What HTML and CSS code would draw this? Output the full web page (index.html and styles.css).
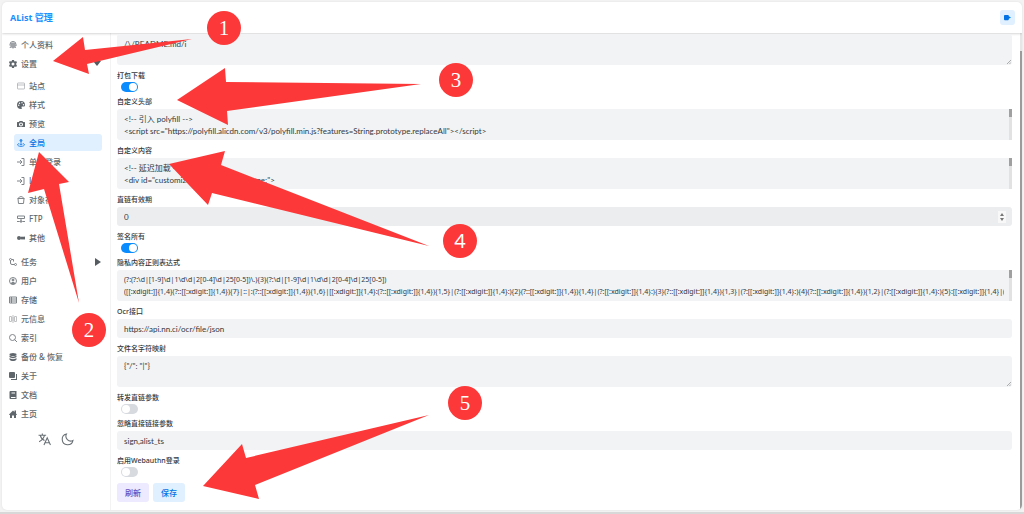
FILE: index.html
```html
<!DOCTYPE html>
<html lang="zh-CN">
<head>
    <meta charset="UTF-8">
    <title>AList 管理</title>
    <link rel="stylesheet" href="styles.css">
</head>
<body>
<div class="window">
    <header class="header">
        <a href="#" class="title">AList 管理</a>
        <button class="logout" aria-label="退出">
            <svg viewBox="0 0 16 16"><path d="M2 2h7a2 2 0 0 1 2 2v1l5 3-5 3v1a2 2 0 0 1-2 2H2a2 2 0 0 1-2-2V4a2 2 0 0 1 2-2z"/></svg>
        </button>
    </header>
    <div class="body">
        <nav class="sidebar">
            <a href="#" class="item">
                <svg class="line" viewBox="0 0 16 16"><path d="M2 9V7a6 6 0 0 1 12 0v3M4 12V8a4 4 0 0 1 8 0v4M6 14V8a2 2 0 0 1 4 0v6M2 12l1 2M8 8v7M13 12l-1 2"/></svg>
                个人资料
            </a>
            <a href="#" class="item">
                <svg viewBox="0 0 16 16"><path fill-rule="evenodd" d="M6 0h4l.6 2.300 1.500.700L14.300 2l1.700 3-1.500 1.500v3L16 11l-1.700 3-2.200-1-1.500.700L10 16H6l-.6-2.300-1.500-.7-2.200 1L0 11l1.500-1.500v-3L0 5l1.700-3 2.200 1 1.500-.7zM8 5a3 3 0 1 0 0 6 3 3 0 0 0 0-6z"/></svg>
                设置
                <span class="arrow down"></span>
            </a>
            <div class="submenu">
                <a href="#" class="item">
                    <svg class="line thin" viewBox="0 0 16 16"><rect x="1" y="2" width="14" height="12" rx="1"/><path d="M1 6h14"/></svg>
                    站点
                </a>
                <a href="#" class="item">
                    <svg viewBox="0 0 16 16"><path fill-rule="evenodd" d="M8 0a8 8 0 1 0 0 16c2 0 2-1.500 1.300-2.500C8.500 12 9.500 11 11 11h2c2 0 3-1 3-3a8 8 0 0 0-8-8zM3.500 7a1.400 1.400 0 1 1 0 2.800 1.400 1.400 0 0 1 0-2.800zM5 3a1.400 1.400 0 1 1 0 2.800A1.400 1.400 0 0 1 5 3zm5-1a1.400 1.400 0 1 1 0 2.800A1.400 1.400 0 0 1 10 2zm3 4a1.400 1.400 0 1 1 0 2.800A1.400 1.400 0 0 1 13 6z"/></svg>
                    样式
                </a>
                <a href="#" class="item">
                    <svg viewBox="0 0 16 16"><path fill-rule="evenodd" d="M5 2h6l1 2h3a1 1 0 0 1 1 1v9H0V5a1 1 0 0 1 1-1h3zM8 5a4 4 0 1 0 0 8 4 4 0 0 0 0-8zm0 2a2 2 0 1 1 0 4 2 2 0 0 1 0-4z"/></svg>
                    预览
                </a>
                <a href="#" class="item active">
                    <svg class="line" viewBox="0 0 16 16"><circle cx="8" cy="3" r="2" fill="currentColor"/><path d="M8 5v7M4 9l-3 2c0 5 14 5 14 0l-3-2M5 10l3 2 3-2"/></svg>
                    全局
                </a>
                <a href="#" class="item">
                    <svg class="line" viewBox="0 0 16 16"><path d="M0 8h10M6 4l4 4-4 4M9 1h5v14H9"/></svg>
                    单点登录
                </a>
                <a href="#" class="item">
                    <svg class="line" viewBox="0 0 16 16"><path d="M0 8h10M6 4l4 4-4 4M9 1h5v14H9"/></svg>
                    LDAP
                </a>
                <a href="#" class="item">
                    <svg class="line" viewBox="0 0 16 16"><path d="M1 5h14M2 5l1 10h10l1-10M3 5c0-5 10-5 10 0"/></svg>
                    对象存储
                </a>
                <a href="#" class="item">
                    <svg class="line" viewBox="0 0 16 16"><path d="M1 2h14v5H1zM8 8v5M0 13h5M11 13h5M6 12h4v2H6z"/></svg>
                    FTP
                </a>
                <a href="#" class="item">
                    <svg viewBox="0 0 16 16"><circle cx="4" cy="8" r="4"/><path d="M6 7h6v2H6z"/><circle cx="10" cy="8" r="3"/><circle cx="14" cy="8" r="3"/></svg>
                    其他
                </a>
            </div>
            <a href="#" class="item">
                <svg class="line" viewBox="0 0 16 16"><circle cx="3" cy="3" r="2"/><circle cx="13" cy="13" r="2"/><path d="M3 5v5a3 3 0 0 0 3 3h5M5 3h4v4"/></svg>
                任务
                <span class="arrow"></span>
            </a>
            <a href="#" class="item">
                <svg class="line" viewBox="0 0 16 16"><circle cx="8" cy="8" r="7"/><circle cx="8" cy="6" r="2" fill="currentColor"/><path fill="currentColor" d="M4 13c2-3 6-3 8 0-3 1-5 1-8 0z"/></svg>
                用户
            </a>
            <a href="#" class="item">
                <svg class="line" viewBox="0 0 16 16"><path d="M1 2h14v12H1zM1 6h14M1 10h14M5 2v12"/></svg>
                存储
            </a>
            <a href="#" class="item light">
                <svg class="line" viewBox="0 0 16 16"><path d="M1 3h4v10H1zM11 3h4v10h-4zM8 0v16M5 6h6M5 10h6"/></svg>
                元信息
            </a>
            <a href="#" class="item">
                <svg class="line" viewBox="0 0 16 16"><circle cx="7" cy="7" r="6"/><path d="M11 11l5 5"/></svg>
                索引
            </a>
            <a href="#" class="item">
                <svg viewBox="0 0 16 16"><ellipse cx="8" cy="3" rx="7" ry="3"/><path d="M1 5c3 3 11 3 14 0v3c-3 3-11 3-14 0zM1 10c3 3 11 3 14 0v3c-3 4-11 4-14 0z"/></svg>
                备份 &amp; 恢复
            </a>
            <a href="#" class="item">
                <svg viewBox="0 0 16 16"><rect width="12" height="12" rx="2"/><path d="M14 4h2v12H4v-2h10z"/></svg>
                关于
            </a>
            <a href="#" class="item">
                <svg viewBox="0 0 16 16"><path fill-rule="evenodd" d="M3 0h12v16H3a2 2 0 0 1-2-2V2a2 2 0 0 1 2-2zm2 3v2h7V3zm-1 9v2h9v-2z"/></svg>
                文档
            </a>
            <a href="#" class="item">
                <svg viewBox="0 0 16 16"><path d="M8 1l3 3V1h3v6l2 2-1 1h-1v6h-4v-5H6v5H2v-6H1L0 9z"/></svg>
                主页
            </a>
            <div class="tools">
                <button aria-label="语言">
                    <svg class="line" viewBox="0 0 24 24"><path d="M1 4h14M8 1v3M12 4c-1 6-6 10-10 12M4 4c1 5 4 8 8 10M11 22l6-13 6 13M13 18h8"/></svg>
                </button>
                <button aria-label="夜间模式">
                    <svg class="line" viewBox="0 0 24 24"><path d="M10 2a9 9 0 0 0 12 12A10 10 0 1 1 10 2z"/></svg>
                </button>
            </div>
        </nav>
        <main class="main">
            <form class="form">
                <div class="area">
                    <textarea aria-label="隐藏文件" wrap="off">/\/README.md/i</textarea>
                    <svg class="grip" viewBox="0 0 5 5"><path d="M0 5l5-5M3 5l2-2"/></svg>
                </div>
                <label for="package">打包下载</label>
                <div class="switch"><input type="checkbox" id="package" checked></div>
                <label for="head">自定义头部</label>
                <div class="area">
                    <textarea id="head" wrap="off">&lt;!-- 引入 polyfill --&gt;
&lt;script src="https://polyfill.alicdn.com/v3/polyfill.min.js?features=String.prototype.replaceAll"&gt;&lt;/script&gt;</textarea>
                    <span class="bar"></span>
                </div>
                <label for="content">自定义内容</label>
                <div class="area">
                    <textarea id="content" wrap="off">&lt;!-- 延迟加载 --&gt;
&lt;div id="customize" style="display: none;"&gt;
        "</textarea>
                    <span class="bar"></span>
                </div>
                <label for="expire">直链有效期</label>
                <div class="number">
                    <input type="number" id="expire" value="0">
                    <span class="spin"></span>
                </div>
                <label for="sign">签名所有</label>
                <div class="switch"><input type="checkbox" id="sign" checked></div>
                <label for="privacy">隐私内容正则表达式</label>
                <div class="area">
                    <textarea id="privacy" class="regex" wrap="off">(?:(?:\d|[1-9]\d|1\d\d|2[0-4]\d|25[0-5])\.){3}(?:\d|[1-9]\d|1\d\d|2[0-4]\d|25[0-5])
([[:xdigit:]]{1,4}(?::[[:xdigit:]]{1,4}){7}|::|:(?::[[:xdigit:]]{1,4}){1,6}|[[:xdigit:]]{1,4}:(?::[[:xdigit:]]{1,4}){1,5}|(?:[[:xdigit:]]{1,4}:){2}(?::[[:xdigit:]]{1,4}){1,4}|(?:[[:xdigit:]]{1,4}:){3}(?::[[:xdigit:]]{1,4}){1,3}|(?:[[:xdigit:]]{1,4}:){4}(?::[[:xdigit:]]{1,4}){1,2}|(?:[[:xdigit:]]{1,4}:){5}:[[:xdigit:]]{1,4}|(?:[[:xdi
git:]]{1,4}:){1,6}:)</textarea>
                    <span class="bar"></span>
                </div>
                <label for="ocr">Ocr接口</label>
                <input type="text" id="ocr" value="https://api.nn.ci/ocr/file/json">
                <label for="mapping">文件名字符映射</label>
                <div class="area">
                    <textarea id="mapping" wrap="off">{"/": "|"}</textarea>
                    <svg class="grip" viewBox="0 0 5 5"><path d="M0 5l5-5M3 5l2-2"/></svg>
                </div>
                <label for="forward">转发直链参数</label>
                <div class="switch"><input type="checkbox" id="forward"></div>
                <label for="ignore">忽略直接链接参数</label>
                <input type="text" id="ignore" value="sign,alist_ts">
                <label for="webauthn">启用Webauthn登录</label>
                <div class="switch"><input type="checkbox" id="webauthn"></div>
                <div class="buttons">
                    <button type="button" class="refresh">刷新</button>
                    <button type="button" class="save">保存</button>
                </div>
            </form>
        </main>
        <div class="scroll"></div>
    </div>
</div>

<!-- numbered steps over the page -->
<svg class="steps" width="1024" height="514" viewBox="0 0 1024 514">
    <path d="M53 61L83 37 85 50 192 39 87 64 89 74z"/>
    <path d="M39 152L69 182 59 184 79 303 44 189 28 193z"/>
    <path d="M177 100L225 68 226 82 421 84 227 111 228 125z"/>
    <path d="M169 164L225 151 221 165 429 246 212 193 208 205z"/>
    <path d="M203 486L242 444 246 458 429 415 255 485 259 499z"/>
    <circle cx="224" cy="28" r="17"/>
    <circle cx="89" cy="330" r="17"/>
    <circle cx="456" cy="80" r="17"/>
    <circle cx="460" cy="241" r="17"/>
    <circle cx="465" cy="403" r="17"/>
    <text x="224" y="35">1</text>
    <text x="89" y="337">2</text>
    <text x="456" y="87">3</text>
    <text x="460" y="248" class="sans">4</text>
    <text x="465" y="410">5</text>
</svg>
</body>
</html>
```
FILE: styles.css
```css
* {
    box-sizing: border-box;
}
body {
    margin: 0;
    padding: 2px 2px 0;
    min-height: 100vh;
    background-color: #f3f3f3;
    border-bottom: 2px solid #d8d8d8;
    font-family: "Noto Sans", "Noto Sans CJK SC", sans-serif;
    font-size: 8px;
    color: #11181c;
}
a {
    color: inherit;
    text-decoration: none;
}
button {
    border: 0;
    padding: 0;
    background: none;
    font: inherit;
}
svg {
    fill: currentColor;
}
.line {
    fill: none;
    stroke: currentColor;
    stroke-width: 2;
}
.item .line {
    opacity: .8;
}
.line.thin {
    stroke-width: 1;
}
.window {
    border-radius: 5px;
    background-color: white;
    box-shadow: 0 0 2px 0 #ddd;
    overflow: hidden;
}
.header {
    position: relative;
    display: flex;
    justify-content: space-between;
    align-items: center;
    height: 31px;
    padding: 0 7px 0 8px;
    box-shadow: 0 0 3px 0 rgba(0, 0, 0, .3);
}
.title {
    font-size: 9px;
    font-weight: bold;
    color: #1890ff;
}
.logout {
    display: flex;
    justify-content: center;
    align-items: center;
    width: 15px;
    height: 15px;
    border-radius: 3px;
    background-color: #e1f0ff;
    color: #0072e5;
}
.logout svg {
    width: 7px;
    height: 7px;
}
.body {
    display: flex;
}
.sidebar {
    width: 109px;
    padding: 3px 8px 0 4px;
    border-right: 1px solid #f3f3f3;
}
.item {
    display: flex;
    align-items: center;
    gap: 4px;
    height: 17px;
    margin-bottom: 2px;
    padding: 0 1px 0 3px;
    border-radius: 3px;
    color: #60676c;
    font-weight: 500;
}
.item svg {
    width: 8px;
    height: 8px;
}
.item.light svg {
    opacity: .4;
}
.submenu {
    padding: 3px 0 5px 8px;
}
.item.active {
    background-color: #e1f0ff;
    color: #0072e5;
}
.arrow {
    margin-left: auto;
    border: 4px solid transparent;
    border-left: 6px solid #555c61;
    border-right: 0;
}
.arrow.down {
    border: 4px solid transparent;
    border-top: 5px solid #555c61;
    border-bottom: 0;
}
.tools {
    display: flex;
    justify-content: center;
    gap: 10px;
    padding: 9px 0 0 3px;
}
.tools button {
    color: #687076;
}
.tools svg {
    display: block;
    width: 13px;
    height: 13px;
}
.main {
    flex: 1;
    padding: 1px 8px 8px 6px;
}
.form {
    display: flex;
    flex-direction: column;
}
label {
    margin: 5px 0 1px;
    font-size: 7px;
    line-height: 12px;
    font-weight: 500;
    color: #33383c;
}
.area,
.number {
    position: relative;
    display: flex;
}
textarea,
input[type="text"],
input[type="number"] {
    width: 100%;
    height: 19px;
    margin: 0;
    padding: 0 7px;
    border: 0;
    border-radius: 3px;
    background-color: #f1f3f5;
    color: #33383c;
    font: 8px Lato, "Noto Sans CJK SC", sans-serif;
}
textarea {
    height: 31px;
    padding: 4px 0 0;
    border: solid #f1f3f5;
    border-width: 0 8px 0 7px;
    line-height: 12px;
    resize: none;
    overflow: hidden;
}
.regex {
    font-family: "Noto Sans", sans-serif;
    font-size: 7px;
}
input[type="number"] {
    background-color: #ecedef;
    appearance: textfield;
}
.grip {
    position: absolute;
    right: 1px;
    bottom: 1px;
    width: 4px;
    height: 4px;
    stroke: #999;
}
.bar {
    position: absolute;
    top: 0;
    right: 0;
    width: 3px;
    height: 31px;
    border-top: 8px solid #a0a0a0;
    background-color: #e2e2e2;
}
.spin {
    position: absolute;
    top: 4px;
    right: 6px;
    display: flex;
    flex-direction: column;
    align-items: center;
    justify-content: space-evenly;
    width: 8px;
    height: 12px;
    background-color: #f8f8f8;
}
.spin::before,
.spin::after {
    content: "";
    border: 2px solid transparent;
    border-top: 0;
    border-bottom: 3px solid #777;
}
.spin::after {
    transform: rotate(180deg);
}
.switch {
    display: flex;
    align-items: center;
    height: 8px;
    padding-left: 4px;
}
.switch input {
    appearance: none;
    width: 17px;
    height: 10px;
    margin: 0;
    padding: 1px;
    border-radius: 5px;
    background-color: #d7dbdf;
}
.switch input::before {
    content: "";
    display: block;
    width: 8px;
    height: 8px;
    border-radius: 50%;
    background-color: white;
}
.switch input:checked {
    background-color: #0a8cff;
}
.switch input:checked::before {
    margin-left: auto;
}
.buttons {
    display: flex;
    gap: 4px;
    padding-top: 7px;
}
.buttons button {
    width: 32px;
    height: 19px;
    border-radius: 3px;
    font-weight: 500;
}
.buttons .refresh {
    background-color: #ede9fe;
    color: #644fc1;
}
.buttons .save {
    background-color: #e1f0ff;
    color: #0072e5;
}
.scroll {
    width: 2px;
    border-top: 18px solid #e6e6e6;
    background-color: #9b9b9b;
}
.steps {
    position: absolute;
    top: 0;
    left: 0;
    fill: #fc3838;
    pointer-events: none;
}
.steps text {
    fill: white;
    font-family: "Liberation Serif", serif;
    font-size: 21px;
    text-anchor: middle;
}
.steps .sans {
    font-family: "Noto Sans", sans-serif;
    font-size: 20px;
}
```
